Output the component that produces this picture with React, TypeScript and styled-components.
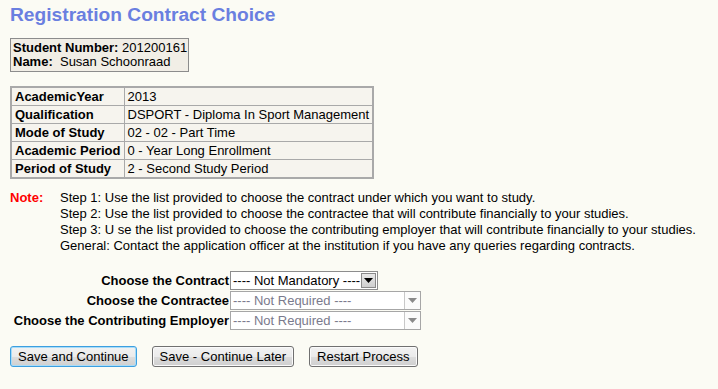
import styled, { createGlobalStyle, css } from "styled-components";

const GlobalStyle = createGlobalStyle`
  html, body {
    margin: 0;
    padding: 0;
    background: #fbfbf4;
  }
  body {
    font-family: "Liberation Sans", Arial, sans-serif;
    font-size: 13px;
    color: #000;
  }
`;

const details = [
  { label: "AcademicYear", value: "2013" },
  { label: "Qualification", value: "DSPORT - Diploma In Sport Management" },
  { label: "Mode of Study", value: "02 - 02 - Part Time" },
  { label: "Academic Period", value: "0 - Year Long Enrollment" },
  { label: "Period of Study", value: "2 - Second Study Period" },
];

const steps = [
  "Step 1: Use the list provided to choose the contract under which you want to study.",
  "Step 2: Use the list provided to choose the contractee that will contribute financially to your studies.",
  "Step 3: U se the list provided to choose the contributing employer that will contribute financially to your studies.",
  "General: Contact the application officer at the institution if you have any queries regarding contracts.",
];

const choices = [
  { label: "Choose the Contract", value: "---- Not Mandatory ----", disabled: false },
  { label: "Choose the Contractee", value: "---- Not Required ----", disabled: true },
  { label: "Choose the Contributing Employer", value: "---- Not Required ----", disabled: true },
];

export default function App() {
  return (
    <Page>
      <GlobalStyle />
      <Title>Registration Contract Choice</Title>

      <StudentBox>
        <div>
          <b>Student Number:</b> 201200161
        </div>
        <div>
          <b>Name:</b>&nbsp; Susan Schoonraad
        </div>
      </StudentBox>

      <DetailTable>
        <tbody>
          {details.map((d) => (
            <tr key={d.label}>
              <LabelCell>{d.label}</LabelCell>
              <ValueCell>{d.value}</ValueCell>
            </tr>
          ))}
        </tbody>
      </DetailTable>

      <Note>
        <NoteLabel>Note:</NoteLabel>
        <NoteLines>
          {steps.map((s) => (
            <div key={s}>{s}</div>
          ))}
        </NoteLines>
      </Note>

      <Form>
        {choices.map((c) => (
          <FormRow key={c.label}>
            <FormLabel>{c.label}</FormLabel>
            <Select $disabled={c.disabled}>
              <SelectText $disabled={c.disabled}>{c.value}</SelectText>
              <SelectArrow $disabled={c.disabled}>
                <svg width="9" height="5" viewBox="0 0 9 5">
                  <path d="M0 0h9L4.5 5z" fill={c.disabled ? "#8a8a8a" : "#000"} />
                </svg>
              </SelectArrow>
            </Select>
          </FormRow>
        ))}
      </Form>

      <Buttons>
        <Button $focused>Save and Continue</Button>
        <Button>Save - Continue Later</Button>
        <Button>Restart Process</Button>
      </Buttons>
    </Page>
  );
}

const Page = styled.div`
  padding: 4px 10px 10px 10px;
  display: flex;
  flex-direction: column;
  align-items: flex-start;
`;

const Title = styled.h1`
  margin: 0;
  font-family: "Liberation Sans", Arial, sans-serif;
  font-size: 19.2px;
  line-height: 22px;
  font-weight: bold;
  color: #6a7fe0;
`;

const StudentBox = styled.div`
  margin-top: 12px;
  border: 1px solid #8c8c8c;
  background: #f1eee6;
  padding: 2px 1px 2px 2px;
  line-height: 14px;
  white-space: nowrap;
`;

const DetailTable = styled.table`
  margin-top: 14px;
  border-collapse: collapse;
  border: 2px solid #a9a9a9;
  background: #f6f4ee;
  width: 362px;
`;

const cellBase = css`
  border: 1px solid #a9a9a9;
  height: 17px;
  padding: 0 3px;
  line-height: 16px;
  white-space: nowrap;
`;

const LabelCell = styled.td`
  ${cellBase}
  font-weight: bold;
  width: 108px;
`;

const ValueCell = styled.td`
  ${cellBase}
`;

const Note = styled.div`
  margin-top: 11px;
  display: flex;
  line-height: 16px;
`;

const NoteLabel = styled.div`
  width: 50px;
  color: #ff0000;
  font-weight: bold;
`;

const NoteLines = styled.div`
  display: flex;
  flex-direction: column;
`;

const Form = styled.div`
  margin-top: 17px;
  display: grid;
  grid-template-columns: 220px auto;
  row-gap: 1px;
  align-items: center;
`;

const FormRow = styled.div`
  display: contents;
`;

const FormLabel = styled.div`
  text-align: right;
  font-weight: bold;
  padding-right: 1px;
  white-space: nowrap;
`;

const Select = styled.div<{ $disabled?: boolean }>`
  display: flex;
  align-items: center;
  justify-content: space-between;
  box-sizing: border-box;
  height: 19px;
  width: ${(p) => (p.$disabled ? "191px" : "148px")};
  background: #fff;
  border: 1px solid ${(p) => (p.$disabled ? "#a6a6a6" : "#8d8d8d")};
  padding-left: 2px;
`;

const SelectText = styled.span<{ $disabled?: boolean }>`
  color: ${(p) => (p.$disabled ? "#7a7a8c" : "#000")};
  white-space: nowrap;
`;

const SelectArrow = styled.span<{ $disabled?: boolean }>`
  display: flex;
  align-items: center;
  justify-content: center;
  box-sizing: border-box;
  height: 17px;
  ${(p) =>
    p.$disabled
      ? css`
          width: 16px;
          border-left: 1px solid #c8c8c8;
          background: #fbfbfb;
        `
      : css`
          width: 15px;
          height: 15px;
          margin-right: 1px;
          border: 1px solid #8a8a8a;
          background: linear-gradient(#e8e8e8, #cfcfcf);
        `}
`;

const Buttons = styled.div`
  margin-top: 16px;
  display: flex;
  gap: 15px;
`;

const Button = styled.button<{ $focused?: boolean }>`
  font-family: "Liberation Sans", Arial, sans-serif;
  font-size: 13px;
  color: #000;
  height: 21px;
  padding: 0 7px;
  border-radius: 3px;
  border: 1px solid ${(p) => (p.$focused ? "#3c9fe0" : "#707070")};
  background: linear-gradient(#f2f2f2 0%, #ebebeb 50%, #dddddd 51%, #cfcfcf 100%);
  box-shadow: ${(p) => (p.$focused ? "inset 0 0 0 1px #a8dcf8" : "inset 0 0 0 1px #fafafa")};
  cursor: pointer;
`;
